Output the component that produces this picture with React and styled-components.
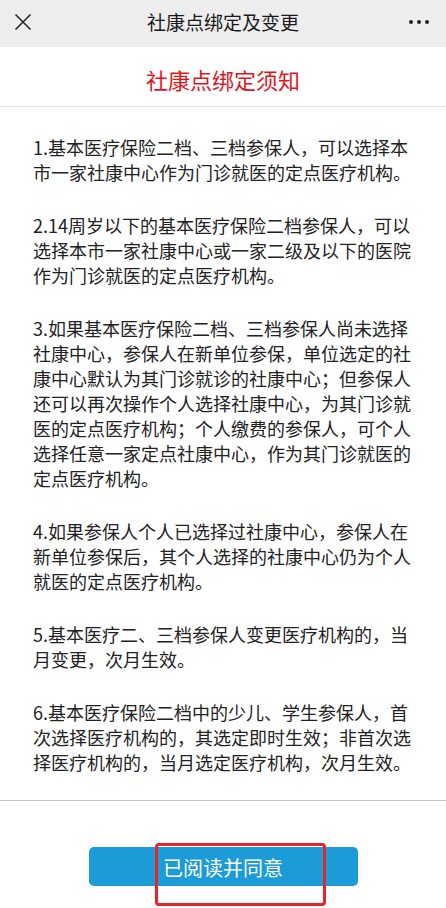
import React from "react";
import styled, { createGlobalStyle } from "styled-components";

const GlobalStyle = createGlobalStyle`
  html, body {
    margin: 0;
    padding: 0;
    background: #ffffff;
  }
  body {
    font-family: "Noto Sans CJK SC", "Noto Sans", sans-serif;
  }
`;

const Page = styled.div`
  position: relative;
  width: 446px;
  min-height: 908px;
  background: #fff;
  overflow: hidden;
`;

const NavBar = styled.div`
  height: 47px;
  background: #ededed;
  display: grid;
  grid-template-columns: 60px 1fr 60px;
  align-items: center;
`;

const NavButton = styled.div`
  display: flex;
  align-items: center;
  justify-content: ${(p) => (p.$right ? "flex-end" : "flex-start")};
  padding: ${(p) => (p.$right ? "0 17px 4px 0" : "0 0 4px 14px")};
  height: 100%;
  box-sizing: border-box;
`;

const NavTitle = styled.div`
  text-align: center;
  font-size: 19px;
  color: #1a1a1a;
  padding-bottom: 4px;
`;

const Dots = styled.div`
  display: flex;
  gap: 4px;
  span {
    width: 4px;
    height: 4px;
    border-radius: 50%;
    background: #1e1e1e;
  }
`;

const Heading = styled.div`
  height: 60px;
  display: flex;
  align-items: center;
  justify-content: center;
  padding-top: 4px;
  box-sizing: border-box;
  font-size: 22px;
  color: #e3141c;
  border-bottom: 1px solid #dedede;
`;

const Notice = styled.div`
  padding: 28px 33px 25px;
  border-bottom: 1px solid #c4c4c4;
`;

const Para = styled.p`
  margin: 0 0 28px;
  font-size: 18px;
  line-height: 25px;
  color: #222;
  &:last-child {
    margin-bottom: 0;
  }
`;

const Footer = styled.div`
  display: flex;
  justify-content: center;
  padding-top: 46px;
`;

const AgreeButton = styled.button`
  width: 269px;
  height: 39px;
  border: none;
  border-radius: 5px;
  background: #1b9bd7;
  color: #fff;
  font-family: "Noto Sans CJK SC", sans-serif;
  font-size: 20px;
  padding: 2px 0 0;
  cursor: pointer;
`;

const Marker = styled.div`
  position: absolute;
  left: 155px;
  top: 843px;
  width: 171px;
  height: 63px;
  box-sizing: border-box;
  border: 3px solid #e3262a;
  border-radius: 4px;
  pointer-events: none;
`;

const items = [
  "1.基本医疗保险二档、三档参保人，可以选择本市一家社康中心作为门诊就医的定点医疗机构。",
  "2.14周岁以下的基本医疗保险二档参保人，可以选择本市一家社康中心或一家二级及以下的医院作为门诊就医的定点医疗机构。",
  "3.如果基本医疗保险二档、三档参保人尚未选择社康中心，参保人在新单位参保，单位选定的社康中心默认为其门诊就诊的社康中心；但参保人还可以再次操作个人选择社康中心，为其门诊就医的定点医疗机构；个人缴费的参保人，可个人选择任意一家定点社康中心，作为其门诊就医的定点医疗机构。",
  "4.如果参保人个人已选择过社康中心，参保人在新单位参保后，其个人选择的社康中心仍为个人就医的定点医疗机构。",
  "5.基本医疗二、三档参保人变更医疗机构的，当月变更，次月生效。",
  "6.基本医疗保险二档中的少儿、学生参保人，首次选择医疗机构的，其选定即时生效；非首次选择医疗机构的，当月选定医疗机构，次月生效。",
];

export default function App() {
  return (
    <Page>
      <GlobalStyle />
      <NavBar>
        <NavButton>
          <svg width="18" height="18" viewBox="0 0 18 18">
            <path d="M1.5 1.5 L16.5 16.5 M16.5 1.5 L1.5 16.5" stroke="#2b2b2b" strokeWidth="1.6" fill="none" />
          </svg>
        </NavButton>
        <NavTitle>社康点绑定及变更</NavTitle>
        <NavButton $right>
          <Dots>
            <span />
            <span />
            <span />
          </Dots>
        </NavButton>
      </NavBar>
      <Heading>社康点绑定须知</Heading>
      <Notice>
        {items.map((t) => (
          <Para key={t}>{t}</Para>
        ))}
      </Notice>
      <Footer>
        <AgreeButton>已阅读并同意</AgreeButton>
      </Footer>
      <Marker />
    </Page>
  );
}
